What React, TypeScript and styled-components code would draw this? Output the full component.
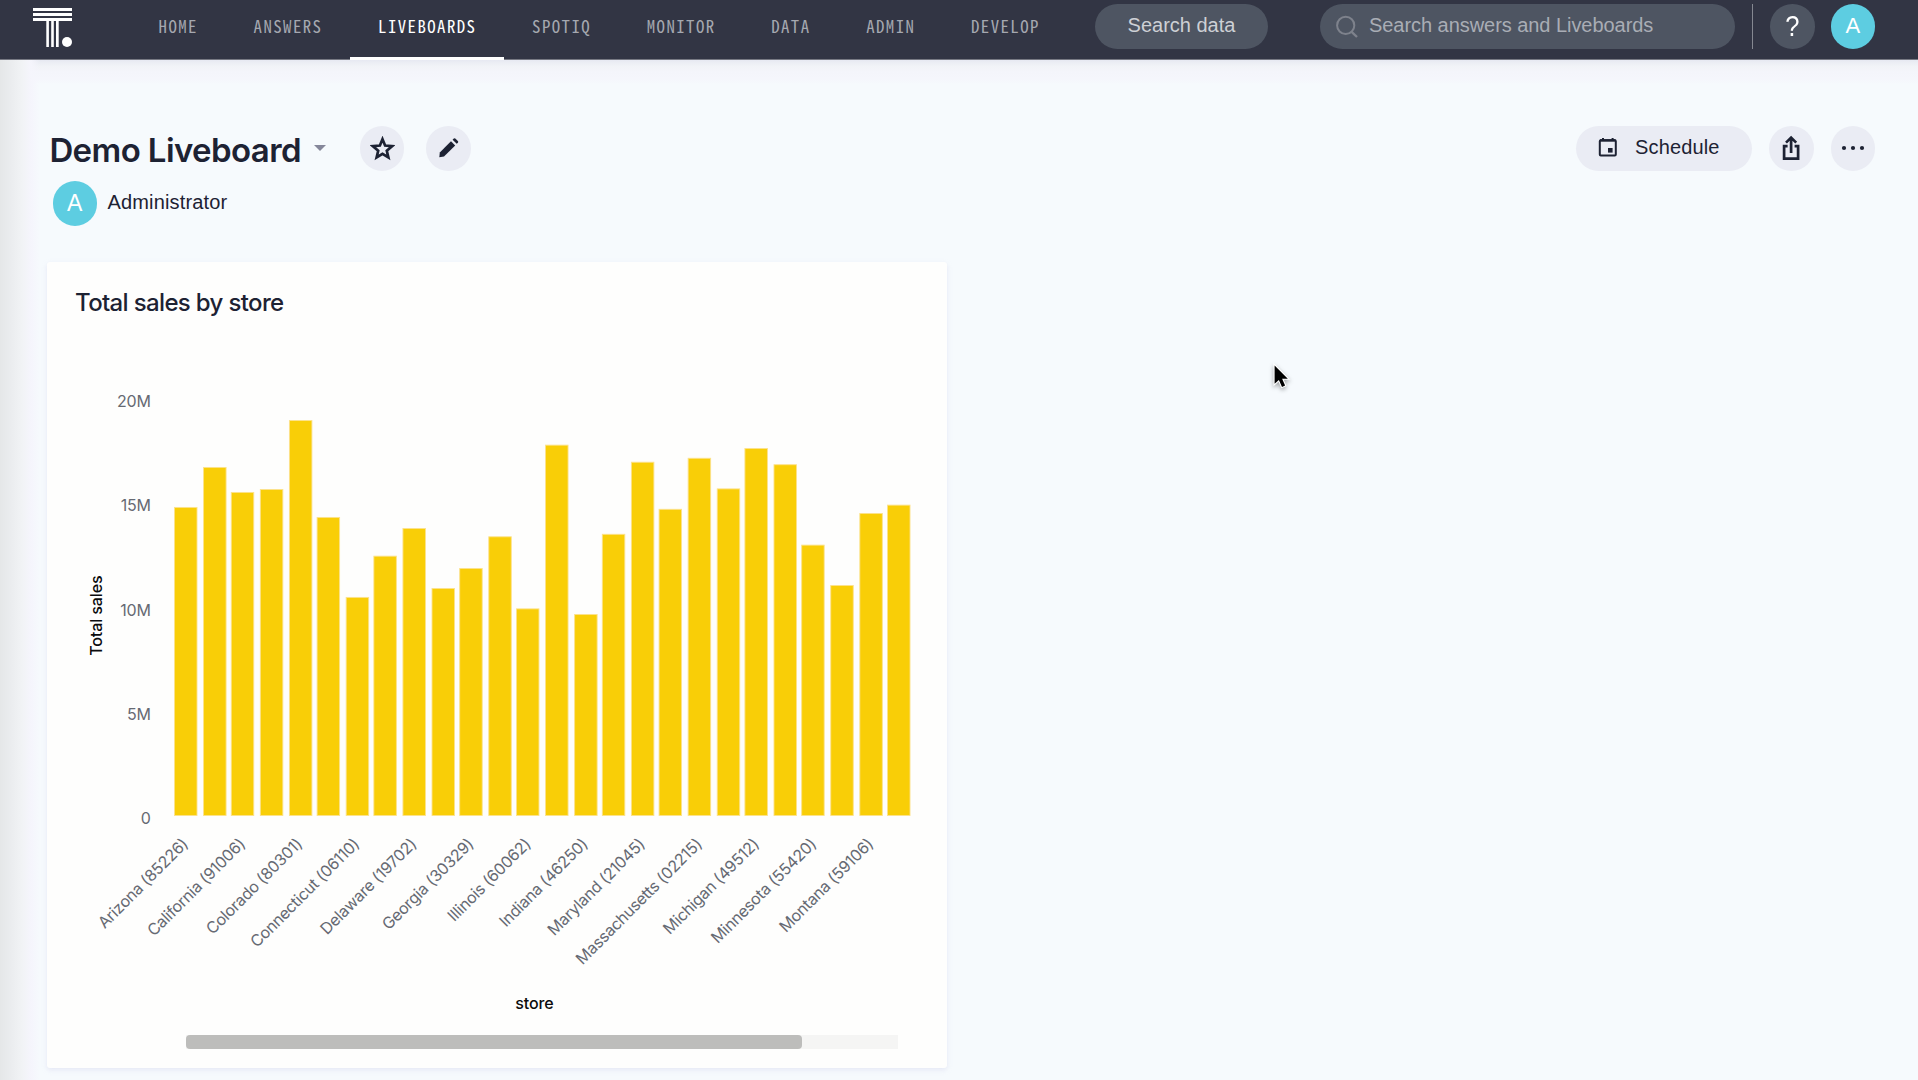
import React from "react";
import styled, { createGlobalStyle } from "styled-components";

const ink = "#1d2233";
const sans = `"Liberation Sans", Arial, sans-serif`;
const inter = `Inter, "Liberation Sans", sans-serif`;

const GlobalStyle = createGlobalStyle`
  * { box-sizing: border-box; }
  body { margin: 0; background: #f6fafd; color: ${ink}; font-family: ${sans}; overflow: hidden; }
  button { border: 0; padding: 0; font: inherit; color: inherit; cursor: pointer; }
  svg { display: block; }
`;

const Page = styled.div`
  position: relative;
  display: flex;
  flex-direction: column;
  width: 100%;
  height: 1080px;
  background: linear-gradient(#e7e9f2 60px, #f1f3f7 66px, #f4f5fb 72px, #f5f6fc 79px, #f6fafd 84px);
`;

const EdgeShade = styled.div`
  position: absolute;
  inset: 60px auto 0 0;
  width: 40px;
  pointer-events: none;
  background: linear-gradient(90deg, #e5e7e8, #eaecee 10px, #f1f3f5 22px, #f5f5fc 31px, rgba(246, 248, 254, 0));
`;

const Header = styled.header`
  display: flex;
  align-items: flex-start;
  flex: none;
  height: 60px;
  padding: 4px 43px 0 33px;
  background: #323544;
  border-bottom: 1px solid #777983;
`;

const Logo = styled.svg`
  margin: 3px 57.8px 0 0;
  flex: none;
`;

const Nav = styled.nav`
  display: flex;
  height: 56px;
`;

const NavItem = styled.a<{ $active?: boolean }>`
  padding: 8px 27.8px 0;
  height: 56px;
  line-height: 28px;
  font-family: "Noto Sans Mono CJK SC", "DejaVu Sans Mono", monospace;
  font-size: 16.8px;
  letter-spacing: 1.45px;
  color: ${(p) => (p.$active ? "#ffffff" : "#a5a8b0")};
  border-bottom: 3px solid ${(p) => (p.$active ? "#ffffff" : "transparent")};
`;

const Tools = styled.div`
  display: flex;
  margin-left: auto;
`;

const DataPill = styled.button`
  width: 173px;
  height: 45px;
  border-radius: 23px;
  background: #4e5562;
  color: #cdd0d5;
  font-size: 20px;
  line-height: 43px;
  padding-bottom: 2px;
  margin-right: 52px;
`;

const SearchBox = styled.div`
  display: flex;
  align-items: center;
  gap: 11px;
  width: 415px;
  height: 45px;
  padding: 0 16px;
  border-radius: 23px;
  background: #4e5562;
  color: #a9adb5;
  font-size: 20px;
  letter-spacing: -0.05px;
  line-height: 41px;
`;

const SearchText = styled.span`
  padding-bottom: 2px;
`;

const Divider = styled.i`
  width: 1px;
  height: 45px;
  margin: 0 17px;
  background: #858891;
`;

const Round = styled.button<{ $bg?: string; $size?: number }>`
  display: grid;
  place-items: center;
  flex: none;
  width: 44.5px;
  height: 44.5px;
  border-radius: 50%;
  background: ${(p) => p.$bg ?? "#eaecf4"};
  color: ${(p) => (p.$bg ? "#ffffff" : ink)};
  font-size: ${(p) => p.$size ?? 22}px;
  line-height: 1;
`;

const HelpButton = styled(Round)`
  margin-right: 16px;
`;

const HelpMark = styled.span`
  transform: scaleX(0.85);
`;

const Board = styled.main`
  display: flex;
  flex-direction: column;
  padding: 66px 43px 0 47px;
`;

const TitleRow = styled.div`
  display: flex;
  align-items: flex-start;
  height: 44.5px;
`;

const Title = styled.h1`
  margin: 2px 0 0 2.4px;
  width: 251.6px;
  white-space: nowrap;
  font: 600 33px/44px ${inter};
  letter-spacing: -0.6px;
`;

const Caret = styled.i`
  margin: 19px 34px 0 13px;
  border: 6px solid transparent;
  border-top: 6px solid #85879a;
  border-bottom: 0;
`;

const Actions = styled.div`
  display: flex;
  gap: 17px;
  margin-left: auto;
`;

const EditButton = styled(Round)`
  margin-left: 22px;
`;

const Schedule = styled.button`
  display: flex;
  align-items: center;
  gap: 17px;
  width: 176px;
  height: 44.5px;
  padding: 0 0 0 22px;
  border-radius: 23px;
  background: #eaecf4;
  font-size: 20px;
  letter-spacing: 0.15px;
`;

const ScheduleText = styled.span`
  padding-bottom: 2px;
`;

const Owner = styled.div`
  display: flex;
  align-items: center;
  gap: 10.5px;
  margin: 10.5px 0 36.5px 5.5px;
  font-size: 20px;
  letter-spacing: 0.15px;
`;

const OwnerName = styled.span`
  padding-bottom: 2px;
`;

const Card = styled.section`
  width: 900px;
  height: 806px;
  border-radius: 3px;
  background: #fefefd;
  box-shadow: 0 2px 5px rgba(205, 205, 235, 0.4);
`;

const CardTitle = styled.h2`
  margin: 0;
  height: 98px;
  padding: 26px 28px 0;
  font: 500 24px/30px ${inter};
  letter-spacing: -0.65px;
`;

const Tick = styled.text`
  font: 400 16px ${inter};
  letter-spacing: -0.25px;
  fill: #666a73;
  text-anchor: end;
`;

const AxisName = styled.text`
  font: 500 16px ${inter};
  letter-spacing: -0.12px;
  fill: #0b0b0d;
  text-anchor: middle;
`;

const ScrollTrack = styled.div`
  width: 712px;
  height: 14px;
  margin-left: 139px;
  background: #f5f5f4;
`;

const ScrollThumb = styled.div`
  width: 616px;
  height: 14px;
  border-radius: 4px;
  background: #bdbdbb;
`;

const Pointer = styled.svg`
  position: absolute;
  left: 1268px;
  top: 360px;
  filter: drop-shadow(0 2px 2px rgba(0, 0, 0, 0.35));
`;

const navItems = ["HOME", "ANSWERS", "LIVEBOARDS", "SPOTIQ", "MONITOR", "DATA", "ADMIN", "DEVELOP"];

const sales = [
  14.79, 16.71, 15.51, 15.65, 18.96, 14.31, 10.47, 12.45, 13.78, 10.9, 11.86, 13.38, 9.92, 17.78, 9.65, 13.5, 16.96,
  14.7, 17.15, 15.68, 17.62, 16.84, 12.98, 11.04, 14.5, 14.9,
];

const stores = [
  "Arizona (85226)",
  "California (91006)",
  "Colorado (80301)",
  "Connecticut (06110)",
  "Delaware (19702)",
  "Georgia (30329)",
  "Illinois (60062)",
  "Indiana (46250)",
  "Maryland (21045)",
  "Massachusetts (02215)",
  "Michigan (49512)",
  "Minnesota (55420)",
  "Montana (59106)",
];

const PX_PER_M = 20.83;
const BASE = 455.1;
const barX = (i: number) => 127 + 1.3845 * Math.round(20.6 * i + 0.25);

function Chart() {
  return (
    <svg width="900" height="675" viewBox="0 0 900 675">
      {[20, 15, 10, 5, 0].map((v) => (
        <Tick key={v} x="103.6" y={463.8 - v * PX_PER_M}>
          {v ? `${v}M` : "0"}
        </Tick>
      ))}
      {sales.map((v, i) => (
        <rect
          key={i}
          x={barX(i) + 0.5}
          y={BASE - v * PX_PER_M + 0.4}
          width="22.5"
          height={v * PX_PER_M}
          fill="#f9ce07"
          stroke="#fce28c"
          strokeWidth="0.9"
        />
      ))}
      {stores.map((s, i) => (
        <Tick key={s} transform={`translate(${142 + i * 57.1} 485) rotate(-45)`}>
          {s}
        </Tick>
      ))}
      <AxisName transform="translate(55 255.7) rotate(-90)">Total sales</AxisName>
      <AxisName x="487.5" y="648.7">
        store
      </AxisName>
    </svg>
  );
}

export default function App() {
  return (
    <Page>
      <GlobalStyle />
      <Header>
        <Logo width="40" height="41" viewBox="0 0 40 41" fill="#fff">
          <path d="M0 1h39v3H0zM0 6h39v3H0zM0 11h39v3H0zM13.3 13h2.6v27h-2.6zM18.2 13h2.6v27h-2.6zM23 13h2.7v27H23z" />
          <circle cx="34" cy="35" r="5" />
        </Logo>
        <Nav>
          {navItems.map((n) => (
            <NavItem key={n} $active={n === "LIVEBOARDS"}>
              {n}
            </NavItem>
          ))}
        </Nav>
        <Tools>
          <DataPill>Search data</DataPill>
          <SearchBox>
            <svg width="22" height="23" viewBox="0 0 22 23" fill="none" stroke="#7e828c" strokeWidth="2">
              <circle cx="9.7" cy="10.4" r="8.6" />
              <path d="M15.6 16.8l5.4 5.2" strokeWidth="2.4" />
            </svg>
            <SearchText>Search answers and Liveboards</SearchText>
          </SearchBox>
          <Divider />
          <HelpButton $bg="#4e5562" $size={30}>
            <HelpMark>?</HelpMark>
          </HelpButton>
          <Round $bg="#5dcde1">A</Round>
        </Tools>
      </Header>
      <Board>
        <TitleRow>
          <Title>Demo Liveboard</Title>
          <Caret />
          <Round>
            <svg width="25" height="25" viewBox="0 0 25 25" fill="none" stroke={ink} strokeWidth="2.7">
              <path d="M12.5 3.2l2.6 6.4 6.9.6-5.2 4.5 1.6 6.8-5.9-3.6-5.9 3.6 1.6-6.8L3 10.2l6.9-.6z" />
            </svg>
          </Round>
          <EditButton>
            <svg width="20" height="20" viewBox="0 0 20 20" fill={ink}>
              <path d="M.3 19.3L.8 14.4 12 3.2l4.2 4.2L5 18.5z" />
              <path d="M13.6 1.7l1.2-1.1q.9-.7 1.8.1l2.2 2.2q.8.9.1 1.8l-1.2 1.1z" />
            </svg>
          </EditButton>
          <Actions>
            <Schedule>
              <svg width="20" height="22" viewBox="0 0 20 22" fill="none" stroke={ink} strokeWidth="2">
                <rect x="1.8" y="3.2" width="16" height="15.4" rx="1" />
                <path d="M2 3.4h15.6" strokeWidth="2.4" />
                <path d="M5 1v3M14.6 1v3" />
                <path d="M10 11h4.6v4.6H10z" fill={ink} stroke="none" />
              </svg>
              <ScheduleText>Schedule</ScheduleText>
            </Schedule>
            <Round>
              <svg width="20" height="26" viewBox="0 0 20 26" fill="none" stroke={ink} strokeWidth="2.7">
                <path d="M6.6 11.1H3.1v12.6h14V11.1h-3.5" />
                <path d="M10.1 18V3M5 7.6l5.1-5 5.1 5" />
              </svg>
            </Round>
            <Round>
              <svg width="24" height="6" viewBox="0 0 24 6" fill={ink}>
                <circle cx="3" cy="3" r="2.1" />
                <circle cx="12" cy="3" r="2.1" />
                <circle cx="21" cy="3" r="2.1" />
              </svg>
            </Round>
          </Actions>
        </TitleRow>
        <Owner>
          <Round $bg="#5dcde1" $size={23}>
            A
          </Round>
          <OwnerName>Administrator</OwnerName>
        </Owner>
        <Card>
          <CardTitle>Total sales by store</CardTitle>
          <Chart />
          <ScrollTrack>
            <ScrollThumb />
          </ScrollTrack>
        </Card>
      </Board>
      <EdgeShade />
      <Pointer width="26" height="36" viewBox="0 0 26 36">
        <path
          d="M6.6 5.5v18.3l4.3-3.9 3.1 7 3.1-1.4-3-6.8h5.7z"
          fill="#000"
          stroke="#fff"
          strokeWidth="2.2"
          paintOrder="stroke"
        />
      </Pointer>
    </Page>
  );
}
